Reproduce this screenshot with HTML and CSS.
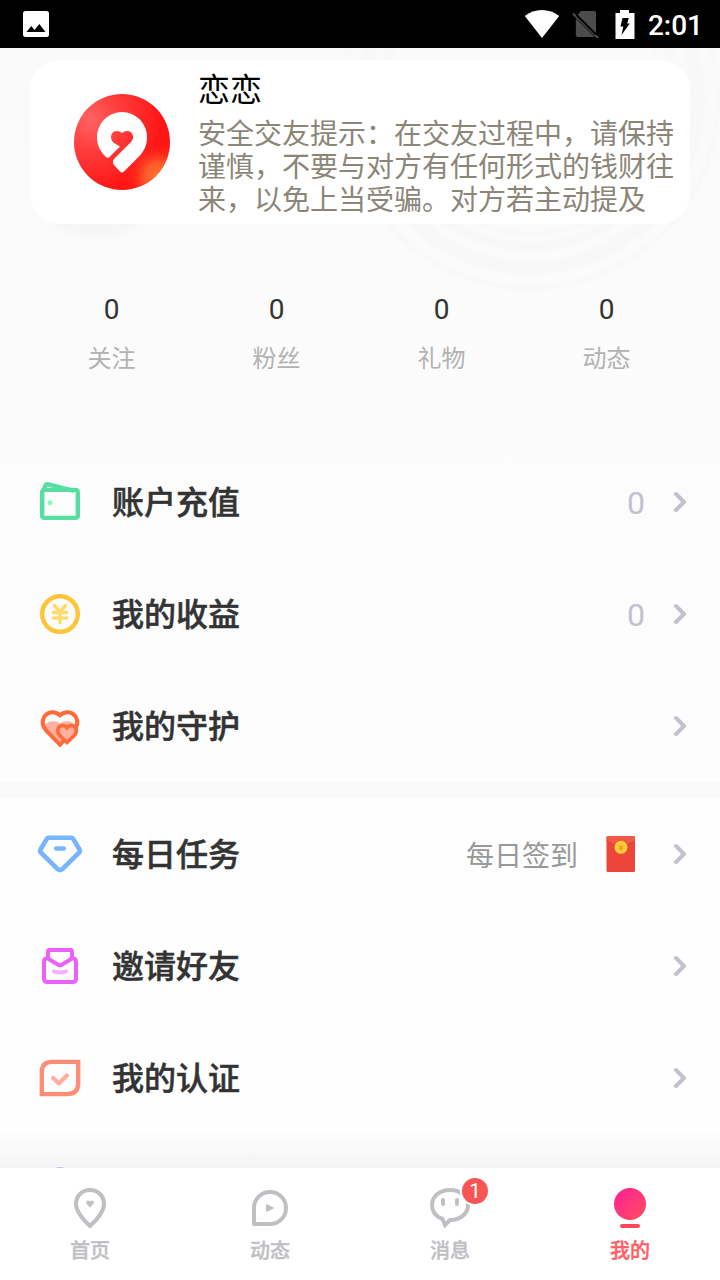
FILE: index.html
```html
<!DOCTYPE html>
<html lang="zh-CN">

<head>
    <meta charset="UTF-8">
    <meta name="viewport" content="width=device-width, initial-scale=1.0">
    <title>我的</title>
    <link rel="stylesheet" href="styles.css">
</head>

<body>
    <div class="screen">
        <!-- Status bar -->
        <header class="status-bar">
            <svg class="status-photo" width="26" height="26" viewBox="0 0 26 26">
                <rect width="26" height="26" rx="2.5" fill="#fff" />
                <path d="M3.5 21L8.3 15l3.2 4L16.300 13l6.200 8z" fill="#000" />
            </svg>
            <div class="status-right">
                <svg width="36" height="28" viewBox="0 0 36 28">
                    <path d="M.8 6C10-2 26-2 35.200 6L18 28z" fill="#fff" />
                </svg>
                <svg class="status-sim" width="28" height="30" viewBox="0 0 28 30">
                    <path d="M10 2h13.500q1.500 0 1.500 1.500V24.500L6.500 6z" fill="#4c4c4c" />
                    <path d="M4.800 9.500L23.500 28H7q-2 0-2.200-2z" fill="#4c4c4c" />
                    <path d="M2 4.500L27 29" stroke="#4c4c4c" stroke-width="2.200" />
                    <path d="M5.500 6L25 25.500" stroke="#000" stroke-width="1.800" />
                </svg>
                <svg class="status-battery" width="20" height="29" viewBox="0 0 20 29">
                    <path d="M5 0h9v3h5.500v26H.500V3H5z" fill="#fff" />
                    <path d="M7.500 8h6.300l-1.600 5.500h2.600L6.500 25l1.800-8.500H5.500z" fill="#000" />
                </svg>
                <span class="status-time">2:01</span>
            </div>
        </header>

        <main class="content">
            <svg class="rings" width="720" height="260" viewBox="0 48 720 260" fill="none" stroke="#f8f8f8">
                <circle cx="530" cy="100" r="188" stroke-width="5" />
                <circle cx="530" cy="100" r="168" stroke-width="14" />
                <circle cx="530" cy="100" r="147" stroke-width="10" />
                <circle cx="530" cy="100" r="134" stroke-width="5" />
            </svg>

            <section class="card">
                <svg class="avatar" width="96" height="96" viewBox="0 0 96 96">
                    <defs>
                        <radialGradient id="shine" cx="17%" cy="27%" r="75%">
                            <stop offset="0" stop-color="#ff6262" />
                            <stop offset=".45" stop-color="#ff3b3b" />
                            <stop offset="1" stop-color="#ff1515" />
                        </radialGradient>
                        <radialGradient id="glow" cx="88%" cy="86%" r="36%">
                            <stop offset="0" stop-color="#ff7a30" />
                            <stop offset=".4" stop-color="#ff6a2c" stop-opacity=".8" />
                            <stop offset="1" stop-color="#ff1717" stop-opacity="0" />
                        </radialGradient>
                    </defs>
                    <circle cx="48" cy="48" r="48" fill="url(#shine)" />
                    <circle cx="48" cy="48" r="48" fill="url(#glow)" />
                    <path d="M48 18A25 25 0 0 1 73 43.500C73 51 70 57 66 61.500L50 77.500Q48 79.500 46 77.500L40 71Q37.500 67.500 40.500 64.500L57 48Q60.500 43.500 58 39.500C55.500 36 51 36.500 48 39C45 36.500 40.500 36 38 39.500C36 43 37.500 47 40 49L46 52.500L36 62.500Q34 65 31.500 62.500C26 57 23 51 23 43.500A25 25 0 0 1 48 18Z" fill="#fff" />
                </svg>
                <div class="card-text">
                    <h1 class="card-name">恋恋</h1>
                    <p class="card-tip">安全交友提示：在交友过程中，请保持<br>谨慎，不要与对方有任何形式的钱财往<br>来，以免上当受骗。对方若主动提及</p>
                </div>
            </section>

            <section class="stats">
                <div class="stat"><span class="stat-value">0</span><span class="stat-label">关注</span></div>
                <div class="stat"><span class="stat-value">0</span><span class="stat-label">粉丝</span></div>
                <div class="stat"><span class="stat-value">0</span><span class="stat-label">礼物</span></div>
                <div class="stat"><span class="stat-value">0</span><span class="stat-label">动态</span></div>
            </section>

            <nav class="menu">
                <a class="row">
                    <svg class="row-icon" width="48" height="48" viewBox="0 0 48 48" fill="none" stroke="#56dea3" stroke-width="4.400" stroke-linejoin="round">
                        <rect x="6.200" y="11.900" width="35.600" height="28" rx="2.200" />
                        <path d="M8.300 12L9 8.500Q9.500 5.800 12.500 6.400L38 12.800" />
                        <circle cx="14" cy="24.700" r="2.500" fill="#7dffc3" stroke="none" />
                    </svg>
                    <span class="row-label">账户充值</span>
                    <span class="row-count">0</span>
                    <svg class="chevron" width="14" height="22" viewBox="0 0 14 22"><path d="M3 3l8 8-8 8" /></svg>
                </a>
                <a class="row">
                    <svg class="row-icon" width="48" height="48" viewBox="0 0 48 48" fill="none" stroke-linecap="round">
                        <circle cx="24" cy="24" r="17.800" stroke="#ffc53a" stroke-width="4.400" />
                        <path d="M18.500 15.500l5.500 6.500 5.500-6.500M24 22v10.500M17.500 22.500h13M17.500 28h13" stroke="#ffdc70" stroke-width="3.600" />
                    </svg>
                    <span class="row-label">我的收益</span>
                    <span class="row-count">0</span>
                    <svg class="chevron" width="14" height="22" viewBox="0 0 14 22"><path d="M3 3l8 8-8 8" /></svg>
                </a>
                <a class="row">
                    <svg class="row-icon" width="48" height="48" viewBox="0 0 48 48" fill="none" stroke="#ff6a38">
                        <path d="M8.500 27C8 18.500 19 17.500 24 21.500C29 17.500 40 18.500 39.500 27C39 30 31 37 24 42.500C17 37 9 30 8.500 27Z" fill="#ffb0a0" stroke="none" />
                        <path d="M24 13.200C19 8.500 12 9.500 8.600 14.200C5.500 19.200 6.300 24.500 10.500 28.800L24 42.700L37.500 28.800C41.700 24.500 42.500 19.200 39.400 14.200C36 9.500 29 8.500 24 13.200Z" stroke-width="4" />
                        <path d="M31 25.800C28.500 22.300 23.500 23.200 22.100 26.500C21 29.300 21.800 31.500 24 33.700L31 40.500L38.200 33.500C40.300 31.300 41 28.800 39.700 26.200C38 23.200 33.500 22.300 31 25.800Z" fill="#ffb0a0" stroke-width="3.600" />
                    </svg>
                    <span class="row-label">我的守护</span>
                    <svg class="chevron" width="14" height="22" viewBox="0 0 14 22"><path d="M3 3l8 8-8 8" /></svg>
                </a>

                <div class="divider"></div>

                <a class="row">
                    <svg class="row-icon" width="48" height="48" viewBox="0 0 48 48" fill="none" stroke="#78b5ff" stroke-width="4.600" stroke-linejoin="round" stroke-linecap="round">
                        <path d="M12.500 7.800h23Q36.500 7.800 37.200 8.800L43.500 19.500Q44.400 21 43.200 22.500L26 39.300Q24 41 22 39.300L4.800 22.500Q3.600 21 4.500 19.500L10.800 8.800Q11.500 7.800 12.500 7.800Z" />
                        <path d="M20.200 18.500h7.600" />
                    </svg>
                    <span class="row-label">每日任务</span>
                    <span class="row-note">每日签到</span>
                    <svg class="packet" width="30" height="36" viewBox="0 0 30 36">
                        <rect x=".500" width="28.500" height="36" rx="1.500" fill="#ec453a" />
                        <path d="M.500 4.500V1.500Q.500 0 2 0H27.500Q29 0 29 1.500V4.500Q15 16 .500 4.500Z" fill="#f25a48" />
                        <path d="M.500 4.500Q15 16 29 4.500" fill="none" stroke="#d93a31" stroke-width=".800" />
                        <circle cx="15" cy="11.300" r="6.500" fill="#fdce35" />
                        <path d="M13 8.500l2 2.200 2-2.200M15 11v3.500M12.800 11h4.400M12.800 13h4.400" fill="none" stroke="#e98a26" stroke-width=".900" />
                    </svg>
                    <svg class="chevron" width="14" height="22" viewBox="0 0 14 22"><path d="M3 3l8 8-8 8" /></svg>
                </a>
                <a class="row">
                    <svg class="row-icon" width="48" height="48" viewBox="0 0 48 48" fill="none" stroke="#ea62f8" stroke-width="4" stroke-linejoin="round">
                        <path d="M12 17V9.500Q12 8 13.500 8h21Q36 8 36 9.500V17" />
                        <path d="M12 16.500H10.500Q8 17 8 19.500V36.500Q8 40 11.500 40h25Q40 40 40 36.500V19.500Q40 17 37.500 16.500H36L25 23.300Q24 23.800 23 23.300Z" />
                        <path d="M18 29.500q6 2 12 0" stroke="#f4b0ff" stroke-linecap="round" />
                    </svg>
                    <span class="row-label">邀请好友</span>
                    <svg class="chevron" width="14" height="22" viewBox="0 0 14 22"><path d="M3 3l8 8-8 8" /></svg>
                </a>
                <a class="row">
                    <svg class="row-icon" width="48" height="48" viewBox="0 0 48 48" fill="none" stroke="#ff8d75" stroke-width="4.400">
                        <path d="M16 7.900H42.200V29Q42.200 40.100 31 40.100H5.800V18.500Q5.800 7.900 16 7.900Z" />
                        <path d="M17.200 24l5.800 5.500 7.800-8" stroke="#ffaf9e" stroke-linecap="round" stroke-linejoin="round" />
                    </svg>
                    <span class="row-label">我的认证</span>
                    <svg class="chevron" width="14" height="22" viewBox="0 0 14 22"><path d="M3 3l8 8-8 8" /></svg>
                </a>
                <a class="row">
                    <svg class="row-icon" width="48" height="48" viewBox="0 0 48 48" fill="none" stroke="#a9c0e8" stroke-width="4">
                        <circle cx="24" cy="22.300" r="19" />
                    </svg>
                </a>
            </nav>
        </main>

        <!-- Bottom tabs -->
        <footer class="tabs">
            <a class="tab">
                <svg width="44" height="44" viewBox="0 0 44 44">
                    <path d="M22 4C14 4 8 10 8 18C8 25.500 16 34.500 22 40C28 34.500 36 25.500 36 18C36 10 30 4 22 4Z" fill="none" stroke="#c0bfc4" stroke-width="4" stroke-linejoin="round" />
                    <path d="M22 21.500L18.500 17.800C17 15.500 20 13 22 15.500C24 13 27 15.500 25.500 17.800Z" fill="#c0bfc4" />
                </svg>
                <span class="tab-label">首页</span>
            </a>
            <a class="tab">
                <svg width="44" height="44" viewBox="0 0 44 44">
                    <path d="M6 38V22A16 16 0 1 1 22 38Z" fill="none" stroke="#c0bfc4" stroke-width="4" stroke-linejoin="round" />
                    <path d="M18.500 18.500v7l7-3.500z" fill="#c0bfc4" stroke="#c0bfc4" stroke-linejoin="round" />
                </svg>
                <span class="tab-label">动态</span>
            </a>
            <a class="tab">
                <svg width="44" height="44" viewBox="0 0 44 44" fill="none" stroke="#c0bfc4" stroke-width="4">
                    <path d="M22 4C11.500 4 4 10.500 4 19C4 26.500 9 31 14.500 33L17 39L22 34C32 34 40 28 40 19C40 10.500 32.500 4 22 4Z" />
                    <path d="M15 14v4M29 14v4" stroke-linecap="round" />
                </svg>
                <span class="badge">1</span>
                <span class="tab-label">消息</span>
            </a>
            <a class="tab active">
                <svg width="44" height="44" viewBox="0 0 44 44">
                    <defs>
                        <linearGradient id="me" x1="0" y1="0" x2="1" y2="1">
                            <stop offset=".1" stop-color="#ff2495" />
                            <stop offset=".9" stop-color="#ff4a60" />
                        </linearGradient>
                    </defs>
                    <circle cx="22" cy="18" r="16" fill="url(#me)" />
                    <rect x="12" y="38" width="20" height="4" rx="2" fill="#ff4758" />
                </svg>
                <span class="tab-label">我的</span>
            </a>
        </footer>
    </div>
</body>

</html>
```

FILE: styles.css
```css
/* Body Styling */
body {
    margin: 0;
    font-family: Roboto, 'Noto Sans CJK SC', sans-serif;
    background: #fff;
}

.screen {
    width: 720px;
    height: 1280px;
    display: flex;
    flex-direction: column;
    overflow: hidden;
}

svg {
    display: block;
    flex: none;
}

/* Status Bar */
.status-bar {
    height: 48px;
    flex: none;
    box-sizing: border-box;
    padding: 0 17px 0 23px;
    display: flex;
    align-items: center;
    justify-content: space-between;
    background: #000;
}

.status-right {
    display: flex;
    align-items: center;
}

.status-sim {
    margin-left: 11px;
}

.status-battery {
    margin-left: 16px;
}

.status-time {
    margin-left: 13px;
    font-size: 28px;
    font-weight: 500;
    line-height: 48px;
    color: #fff;
    padding-top: 3px;
}

/* Content */
.content {
    position: relative;
    z-index: 0;
    flex: 1;
    min-height: 0;
    box-sizing: border-box;
    padding-top: 12px;
    overflow: hidden;
    background: linear-gradient(#fafafa, #fff);
}

.content::after {
    content: '';
    position: absolute;
    left: 0;
    right: 0;
    bottom: 0;
    height: 40px;
    background: linear-gradient(rgba(0, 0, 0, 0), rgba(0, 0, 0, 0.045));
}

.rings {
    position: absolute;
    top: 0;
    left: 0;
    filter: blur(1px);
}

/* Profile Card */
.card {
    position: relative;
    height: 164px;
    margin: 0 30px;
    padding-left: 44px;
    box-sizing: border-box;
    display: flex;
    align-items: center;
    gap: 28px;
    border-radius: 30px;
    background: #fff;
}

.card::before {
    content: '';
    position: absolute;
    z-index: -1;
    left: 18px;
    bottom: -12px;
    width: 96px;
    height: 60px;
    border-radius: 50%;
    background: #f5f5f5;
    filter: blur(4px);
}

.card-text {
    align-self: flex-start;
    padding-top: 7px;
}

.card-name {
    margin: 0;
    font-size: 32px;
    font-weight: 400;
    line-height: 47px;
    color: #000;
}

.card-tip {
    margin: 4px 0 0;
    font-size: 28px;
    line-height: 33px;
    color: #8b8678;
    white-space: nowrap;
}

/* Stats */
.stats {
    display: flex;
    margin: 70px 31px 0 29px;
}

.stat {
    flex: 1;
    display: flex;
    flex-direction: column;
    align-items: center;
}

.stat-value {
    font-size: 28px;
    line-height: 32px;
    color: #333;
}

.stat-label {
    margin-top: 15px;
    font-size: 24px;
    line-height: 36px;
    color: #b2b2b2;
}

/* Menu Rows */
.menu {
    margin-top: 69px;
}

.row {
    height: 112px;
    padding: 0 33px 0 36px;
    display: flex;
    align-items: center;
}

.row-label {
    flex: 1;
    margin-left: 28px;
    padding-bottom: 4px;
    font-size: 32px;
    font-weight: 500;
    color: #333;
    -webkit-text-stroke: 0.5px #333;
}

.row-count {
    margin-right: 28px;
    padding-top: 2px;
    font-size: 32px;
    color: #c2c1cd;
}

.row-note {
    padding-bottom: 1px;
    font-size: 28px;
    color: #999;
}

.packet {
    margin: 0 37px 0 28px;
}

.chevron {
    fill: none;
    stroke: #c2c1cd;
    stroke-width: 4;
    stroke-linecap: round;
    stroke-linejoin: round;
}

.divider {
    height: 16px;
    background: #fafafa;
}

/* Bottom Tabs */
.tabs {
    height: 112px;
    flex: none;
    display: flex;
    background: #fff;
}

.tab {
    position: relative;
    flex: 1;
    display: flex;
    flex-direction: column;
    align-items: center;
    padding-top: 18px;
    color: #c0bfc4;
}

.tab-label {
    margin-top: 6px;
    font-size: 20px;
    font-weight: 500;
    line-height: 30px;
    -webkit-text-stroke: 0.4px currentColor;
}

.tab.active {
    color: #ff6068;
}

.badge {
    position: absolute;
    top: 10px;
    left: 102px;
    width: 26px;
    height: 26px;
    border-radius: 50%;
    background: #fa5555;
    box-shadow: 0 0 0 2px #fff;
    font-size: 20px;
    line-height: 27px;
    text-align: center;
    color: #fff;
}
```
